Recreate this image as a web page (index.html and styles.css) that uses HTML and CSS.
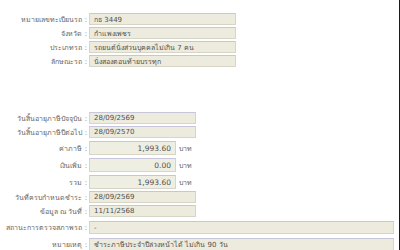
FILE: index.html
```html
<!DOCTYPE html>
<html lang="th">
<head>
<meta charset="utf-8">
<link rel="stylesheet" href="styles.css">
</head>
<body>
<div class="page">
  <div class="section top">
    <div class="row"><div class="label">หมายเลขทะเบียนรถ :</div><div class="box w-top">กธ 3449</div></div>
    <div class="row"><div class="label">จังหวัด :</div><div class="box w-top">กำแพงเพชร</div></div>
    <div class="row"><div class="label">ประเภทรถ :</div><div class="box w-top">รถยนต์นั่งส่วนบุคคลไม่เกิน 7 คน</div></div>
    <div class="row"><div class="label">ลักษณะรถ :</div><div class="box w-top">นั่งสองตอนท้ายบรรทุก</div></div>
  </div>
  <div class="section bottom">
    <div class="row"><div class="label">วันสิ้นอายุภาษีปัจจุบัน :</div><div class="box w-date">28/09/2569</div></div>
    <div class="row"><div class="label">วันสิ้นอายุภาษีปีต่อไป :</div><div class="box w-date">28/09/2570</div></div>
    <div class="row num"><div class="label">ค่าภาษี :</div><div class="box w-num">1,993.60</div><div class="unit">บาท</div></div>
    <div class="row num"><div class="label">เงินเพิ่ม :</div><div class="box w-num">0.00</div><div class="unit">บาท</div></div>
    <div class="row num"><div class="label">รวม :</div><div class="box w-num">1,993.60</div><div class="unit">บาท</div></div>
    <div class="row"><div class="label">วันที่ครบกำหนดชำระ :</div><div class="box w-date">28/09/2569</div></div>
    <div class="row"><div class="label">ข้อมูล ณ วันที่ :</div><div class="box w-date">11/11/2568</div></div>
    <div class="row wide"><div class="label">สถานะการตรวจสภาพรถ :</div><div class="box w-full">-</div></div>
    <div class="row wide"><div class="label">หมายเหตุ :</div><div class="box w-full">ชำระภาษีประจำปีล่วงหน้าได้ ไม่เกิน 90 วัน</div></div>
  </div>
</div>
</body>
</html>
```

FILE: styles.css
```css
html, body {
  margin: 0;
  padding: 0;
  background: #ffffff;
}

.page {
  width: 399px;
  height: 250px;
  border-right: 1px solid #1a1a1a;
  box-sizing: content-box;
  font-family: "DejaVu Sans", "Noto Sans", sans-serif;
  font-size: 7px;
  color: #555555;
  overflow: hidden;
}

.section {
  display: flex;
  flex-direction: column;
}

.top {
  padding-top: 13px;
  gap: 2px;
}

.bottom {
  padding-top: 45px;
  gap: 2px;
}

.row {
  display: flex;
  align-items: center;
  height: 12px;
}

.row.num {
  height: 14px;
  margin-top: 1px;
}

.row.wide {
  height: 13px;
  margin-top: 2px;
}

.label {
  width: 89px;
  text-align: right;
  padding-right: 2px;
  box-sizing: border-box;
  color: #666666;
  white-space: nowrap;
}

.box {
  height: 100%;
  box-sizing: border-box;
  background: #ecebdd;
  border: 1px solid #d6d5c6;
  border-top-color: #c6c5da;
  padding: 0 4px;
  display: flex;
  align-items: center;
  white-space: nowrap;
  overflow: hidden;
  color: #505050;
}

.w-top { width: 147px; }
.w-date { width: 107px; }
.w-num {
  width: 87px;
  justify-content: flex-end;
  background: #efeee3;
  font-size: 7.5px;
}
.w-full { width: 305px; }

.unit {
  padding-left: 3px;
  color: #666666;
}
```
